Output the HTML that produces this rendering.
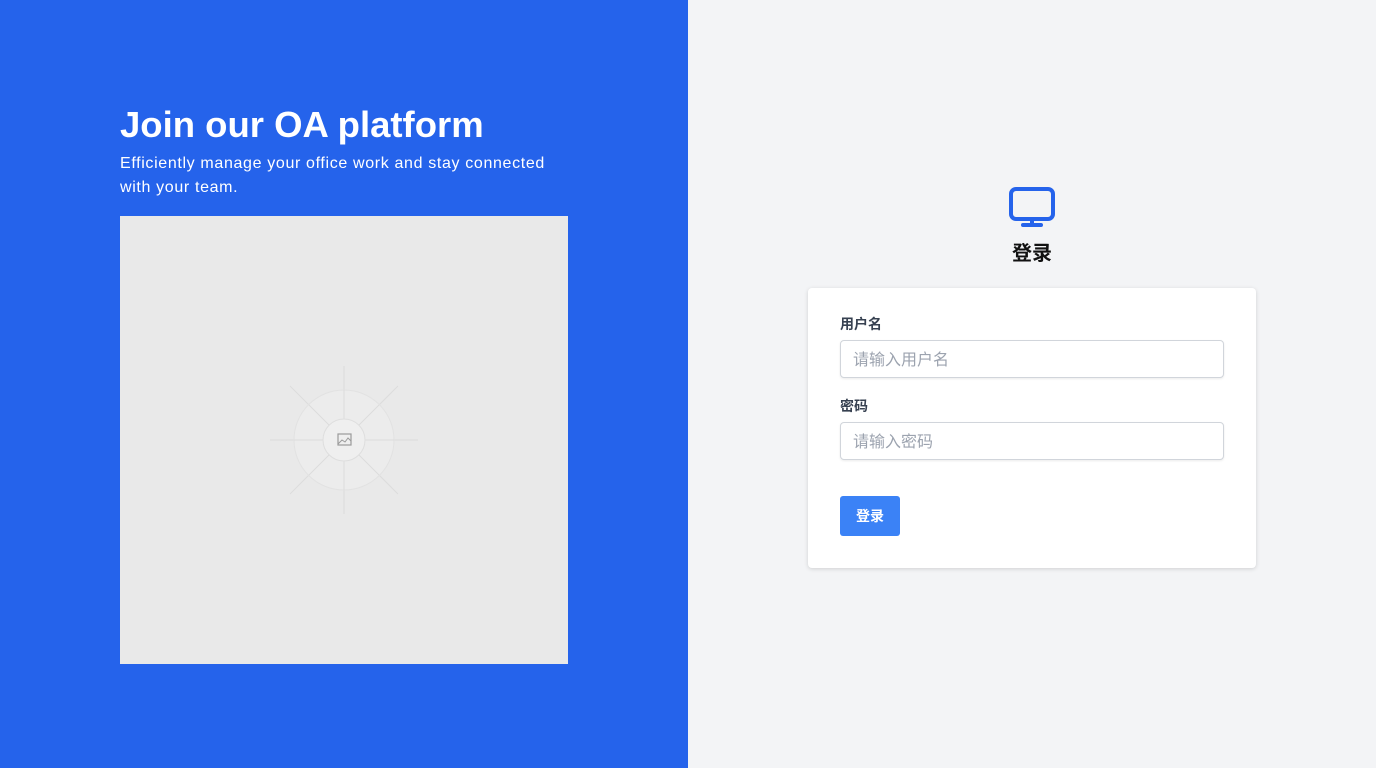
<!DOCTYPE html>
<html><head><meta charset="utf-8"><style>
*{box-sizing:border-box;margin:0;padding:0}
body{width:1376px;height:768px;font-family:"Liberation Sans","Noto Sans CJK SC",sans-serif;position:relative;overflow:hidden;background:#f3f4f6}
.left{position:absolute;left:0;top:0;width:688px;height:768px;background:#2563eb;color:#fff}
h1{position:absolute;left:120px;top:104px;font-size:36.5px;font-weight:bold;letter-spacing:0}
.sub{position:absolute;left:120px;top:152px;width:440px;font-size:16px;line-height:24px;letter-spacing:0.65px}
.img{position:absolute;left:120px;top:216px;width:448px;height:448px;background:#e9e9e9}
.lbl{position:absolute;left:840px;font-size:14px;font-weight:bold;color:#374151}
.inp{position:absolute;left:840px;width:384px;height:38px;background:#fff;border:1px solid #d1d5db;border-radius:4px;box-shadow:0 1px 2px rgba(0,0,0,.08);font-size:16px;color:#9ca3af;padding:10px 12px 6px;line-height:20px}
</style></head><body>
<div class="left">
<h1>Join our OA platform</h1>
<div class="sub">Efficiently manage your office work and stay connected with your team.</div>
<div class="img">
<svg width="448" height="448" viewBox="0 0 448 448">
<g stroke="#dcdcdc" stroke-width="1" fill="none">
<line x1="224" y1="150" x2="224" y2="298"/><line x1="150" y1="224" x2="298" y2="224"/>
<line x1="170" y1="170" x2="278" y2="278"/><line x1="278" y1="170" x2="170" y2="278"/>
<circle cx="224" cy="224" r="50" fill="#ececec" stroke="#e2e2e2"/>
<line x1="224" y1="174" x2="224" y2="274"/><line x1="174" y1="224" x2="274" y2="224"/>
<line x1="189" y1="189" x2="259" y2="259"/><line x1="259" y1="189" x2="189" y2="259"/>
<circle cx="224" cy="224" r="21" fill="#efefef" stroke="#dedede"/>
</g>
<rect x="218" y="218" width="13" height="11" fill="none" stroke="#9a9a9a" stroke-width="1.2"/>
<path d="M218 228 l4-4 3 2 3-4 3 3" fill="none" stroke="#9a9a9a" stroke-width="1"/>
</svg>
</div>
</div>
<svg style="position:absolute;left:1008px;top:186px" width="48" height="44" viewBox="0 0 48 44" fill="none" stroke="#2563eb" stroke-width="4" stroke-linecap="round" stroke-linejoin="round">
<rect x="3" y="3" width="42" height="30" rx="5"/><line x1="24" y1="33" x2="24" y2="39"/><line x1="15" y1="39" x2="33" y2="39"/>
</svg>
<div style="position:absolute;left:1012px;top:237px;font-size:20px;font-weight:bold;color:#111">登录</div>
<div style="position:absolute;left:808px;top:288px;width:448px;height:280px;background:#fff;border-radius:4px;box-shadow:0 1px 4px rgba(0,0,0,.15)"></div>
<div class="lbl" style="top:314px">用户名</div>
<div class="inp" style="top:340px">请输入用户名</div>
<div class="lbl" style="top:396px">密码</div>
<div class="inp" style="top:422px">请输入密码</div>
<div style="position:absolute;left:840px;top:496px;width:60px;height:40px;background:#3b82f6;border-radius:3px;color:#fff;font-size:14px;font-weight:bold;text-align:center;line-height:40px">登录</div>
</body></html>
